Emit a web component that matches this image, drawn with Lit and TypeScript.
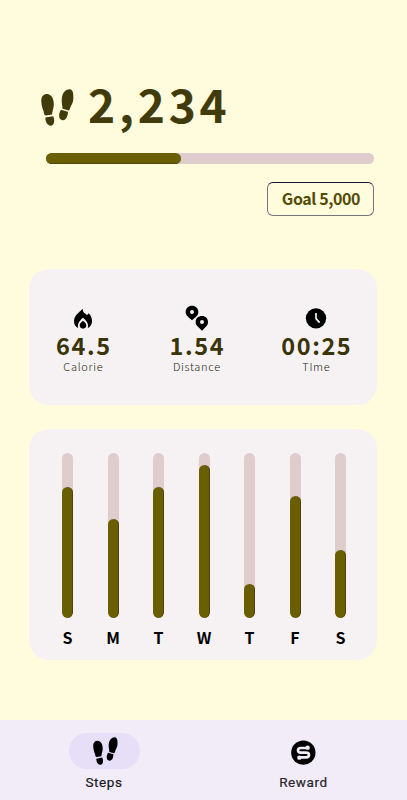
import { LitElement, html, css, svg } from "lit";
import { customElement, property } from "lit/decorators.js";

const icons = {
  flame: svg`<svg width="20" height="24" viewBox="0 0 60 72"><path fill="#000" d="M29 8C18 20 3 28 3 46C3 56 8 63 16 67C12 56 17 46 30 35C43 46 48 56 44 67C52 63 57 56 57 46C57 36 54 28 47 22L42 28C40 25 38 23 35 22C31 19 29 14 29 8Z M30 44C22 50 20 54 20 58C20 64 24 68 30 68C36 68 40 64 40 58C40 54 38 50 30 44Z"/></svg>`,
  pins: svg`<svg width="24" height="26" viewBox="0 0 72 78"><g fill="#000" fill-rule="evenodd"><path d="M21 2C10 2 2 10 2 21C2 31 9 35 21 46C33 35 40 31 40 21C40 10 32 2 21 2Z M21 15a6 6 0 1 1 0 12a6 6 0 1 1 0-12Z"/><path d="M51 33C40 33 32 40 32 51C32 61 39 65 51 77C63 65 69 61 69 51C69 40 61 33 51 33Z M51 45a6 6 0 1 1 0 12a6 6 0 1 1 0-12Z"/></g></svg>`,
  clock: svg`<svg width="22" height="24" viewBox="0 0 66 72"><circle cx="33" cy="37" r="30.5" fill="#000"/><path d="M33 21V38L44 50" fill="none" stroke="#f6f2f4" stroke-width="5"/></svg>`,
  reward: svg`<svg width="26" height="28" viewBox="0 0 78 84"><circle cx="37" cy="47" r="36.500" fill="#000"/><g fill="none" stroke="#f2ecf8" stroke-width="8" stroke-linecap="round"><path d="M48 33H29Q21 33 21 40T29 47H45Q54 47 54 54T45 61H26"/></g><circle cx="50" cy="32" r="6.500" fill="#f2ecf8"/><circle cx="25" cy="62" r="6.500" fill="#f2ecf8"/></svg>`,
};

@customElement("foot-prints")
class FootPrints extends LitElement {
  static styles = css`
    :host { display: block; }
    .prints { display: block; width: 100%; height: 100%; fill: currentColor; }
  `;
  render() {
    return html`<svg class="prints" viewBox="35 42 98 110" preserveAspectRatio="none">
      <path d="M51 57C40 58 35 68 36 80C37 95 40 101 43 109C44 117 45 121 50 121L68 118C68 109 72 101 73 90C74 72 66 56 51 57Z"/>
      <path d="M48 127L71 123C76 132 76 149 65 151C53 152 48 139 48 127Z"/>
      <path d="M121 43C108 42 99 54 97 69C95 82 99 91 99 101L117 106C121 105 121 99 124 92C129 84 132 76 131 64C131 53 129 44 121 43Z"/>
      <path d="M94 104L115 110C115 123 110 136 99 135C87 134 86 117 94 104Z"/>
    </svg>`;
  }
}

@customElement("day-bar")
class DayBar extends LitElement {
  @property() day = "";
  @property({ type: Number }) steps = 0;
  static styles = css`
    :host { display: flex; flex-direction: column; align-items: center; width: 11px; }
    .track { display: flex; align-items: flex-end; width: 11px; height: 165px; border-radius: 6px; background: #dfcccd; overflow: hidden; }
    .fill { width: 11px; box-sizing: border-box; border: 0 solid #51400a; border-right-width: 1px; border-radius: 6px; background: #695e00; }
    .day { margin-top: 7px; font-size: 16px; line-height: 24px; font-weight: 700; color: #000; }
  `;
  render() {
    return html`<div class="track"><div class="fill" style="height:${this.steps}px"></div></div>
      <div class="day">${this.day}</div>`;
  }
}

@customElement("app-root")
class AppRoot extends LitElement {
  static styles = css`
    :host {
      display: flex; flex-direction: column; box-sizing: border-box; width: 407px; height: 800px;
      background: #fffcdd; overflow: hidden;
      font-family: "Noto Sans CJK SC", "Noto Sans CJK JP", sans-serif;
    }
    .hero { height: 269px; box-sizing: border-box; padding: 79px 33px 0 45px; }
    .count { display: flex; height: 60px; margin-left: -4px; }
    .count foot-prints { width: 33px; height: 37px; margin: 10px 0 0 0; color: #413b0b; }
    .total { margin-left: 14px; font-size: 46px; line-height: 48px; font-weight: 700; letter-spacing: 3.800px; color: #413b0b; }
    .progress { margin-top: 14px; height: 11px; border-radius: 6px; background: #dfcccd; margin-left: 0.5px; }
    .done { width: 41.300%; height: 11px; box-sizing: border-box; border-radius: 6px; background: #695e00; border-bottom: 1px solid #51480a; }
    .goal {
      margin: 18px 0 0 auto; width: 107px; height: 34px; box-sizing: border-box; border: 1px solid #77757b; border-top-color: #16123a;
      border-radius: 6px; text-align: center; font-size: 16px; line-height: 31px; font-weight: 700; letter-spacing: -0.400px; text-indent: 1px; color: #554b05;
    }
    .card { margin: 0 30px 0 29px; border-radius: 20px; background: #f6f2f4; box-sizing: border-box; flex: none; }
    .stats { display: flex; height: 136px; padding: 36px 24px 0 17px; justify-content: space-between; }
    .stat { display: flex; flex-direction: column; align-items: center; width: 74px; }
    .stat:nth-child(2) { margin-right: 6px; }
    .icon { height: 26px; display: flex; align-items: center; }
    .value { margin-top: 1px; font-size: 23.500px; line-height: 26px; font-weight: 700; letter-spacing: 1.600px; margin-right: -1.600px; color: #393305; white-space: nowrap; }
    .label { font-size: 11px; line-height: 16px; font-weight: 300; letter-spacing: 0.700px; margin-right: -0.700px; color: #231f0c; }
    .week { display: flex; justify-content: space-between; height: 231px; margin-top: 24px; padding: 24px 31px 0 33px; }
    .nav { display: flex; margin-top: auto; height: 80px; flex: none; background: #f2ecf8; font-family: Roboto, sans-serif; }
    .tab { width: 199px; display: flex; flex-direction: column; align-items: center; padding-top: 13px; box-sizing: border-box; }
    .tab:first-child { width: 204px; padding-left: 4px; }
    .pill { display: flex; justify-content: center; align-items: center; width: 71px; height: 36px; border-radius: 18px; }
    .active { background: #e7def7; }
    .pill foot-prints { width: 25px; height: 28px; margin-left: 3px; color: #000; }
    .name { margin-top: 5px; font-size: 13.500px; line-height: 16px; font-weight: 400; letter-spacing: 0.600px; color: #19171c; -webkit-text-stroke: 0.200px currentColor; }
    .muted { color: #29252e; }
  `;
  private stats = [
    { icon: icons.flame, value: "64.5", label: "Calorie" },
    { icon: icons.pins, value: "1.54", label: "Distance" },
    { icon: icons.clock, value: "00:25", label: "TIme" },
  ];
  private week: [string, number][] = [["S", 131], ["M", 99], ["T", 131], ["W", 153], ["T", 34], ["F", 122], ["S", 68]];

  render() {
    return html`
      <section class="hero">
        <div class="count"><foot-prints></foot-prints><div class="total">2,234</div></div>
        <div class="progress"><div class="done"></div></div>
        <div class="goal">Goal 5,000</div>
      </section>
      <section class="card stats">
        ${this.stats.map((s) => html`<div class="stat">
          <div class="icon">${s.icon}</div><div class="value">${s.value}</div><div class="label">${s.label}</div>
        </div>`)}
      </section>
      <section class="card week">
        ${this.week.map(([day, steps]) => html`<day-bar .day=${day} .steps=${steps}></day-bar>`)}
      </section>
      <nav class="nav">
        <div class="tab"><div class="pill active"><foot-prints></foot-prints></div><div class="name">Steps</div></div>
        <div class="tab"><div class="pill">${icons.reward}</div><div class="name muted">Reward</div></div>
      </nav>`;
  }
}
